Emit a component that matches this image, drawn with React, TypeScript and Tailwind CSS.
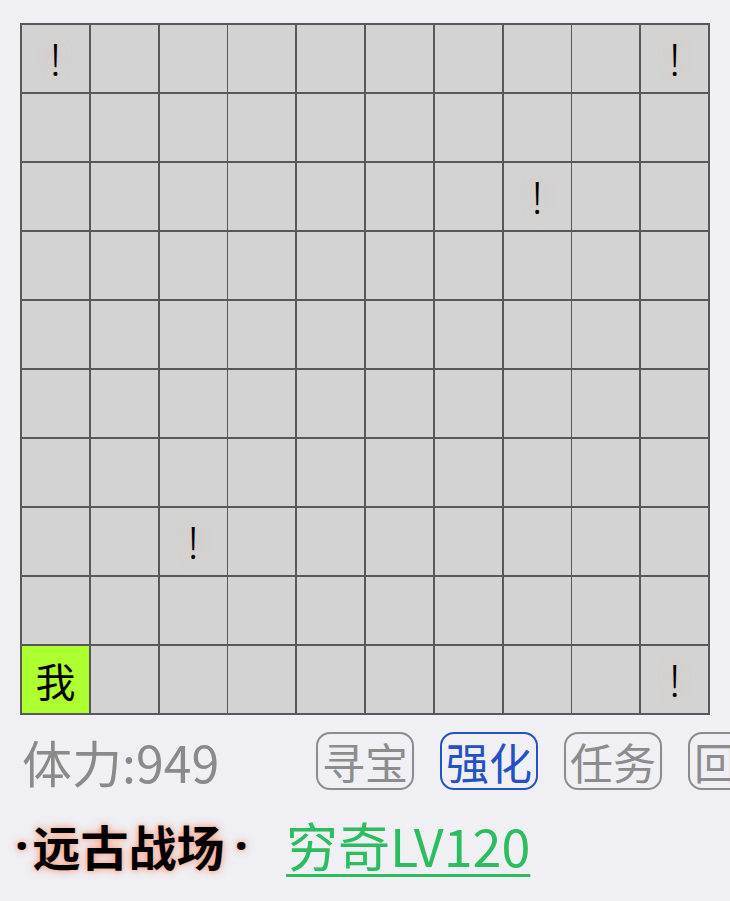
import React from "react";

const marks = new Set(["0-0", "0-9", "2-7", "7-2", "9-9"]);
const menu = ["寻宝", "强化", "任务", "回城"];

const Cell = ({ r, c }: { r: number; c: number }) => {
  if (r === 9 && c === 0) {
    return (
      <div className="flex h-[67px] w-[67px] items-center justify-center bg-[#adff2f] text-[40px] text-black">
        我
      </div>
    );
  }
  return (
    <div className="flex h-[67px] w-[67px] items-center justify-center bg-[#d3d3d3] text-[44px] leading-none text-black">
      {marks.has(`${r}-${c}`) && (
        <span className="font-['Noto_Sans',sans-serif] font-light [text-shadow:0_0_16px_#e9b7a8]">!</span>
      )}
    </div>
  );
};

export default function App() {
  return (
    <div className="min-h-[901px] w-[730px] overflow-hidden bg-[#efeff4] pt-[23px] font-['Noto_Sans_CJK_SC','Noto_Sans',sans-serif]">
      {/* map */}
      <div className="ml-[20px] grid w-[690px] grid-cols-10 gap-[2px] bg-[#585858] p-[2px]">
        {Array.from({ length: 100 }, (_, i) => (
          <Cell key={i} r={Math.floor(i / 10)} c={i % 10} />
        ))}
      </div>

      {/* stats + menu */}
      <div className="mt-[16px] flex h-[60px] items-center whitespace-nowrap">
        <div className="ml-[22px] w-[294px] shrink-0 text-[50px] leading-none text-[#8a8a8a]">体力:949</div>
        <div className="flex shrink-0 gap-[26px]">
          {menu.map((m) => (
            <button
              key={m}
              className={
                m === "强化"
                  ? "h-[58px] w-[98px] shrink-0 rounded-[14px] border-2 border-[#2452c4] text-[43px] leading-none text-[#2452c4]"
                  : "h-[58px] w-[98px] shrink-0 rounded-[14px] border-2 border-[#8c8c8c] text-[43px] leading-none text-[#8c8c8c]"
              }
            >
              {m}
            </button>
          ))}
        </div>
      </div>

      {/* location */}
      <div className="mt-[28px] flex items-center whitespace-nowrap">
        <div className="ml-[11px] flex items-center text-[48px] font-bold leading-none text-black [text-shadow:0_0_10px_#f5a184,0_0_4px_#f7b9a2]">
          <span className="px-[4px] font-['Noto_Sans',sans-serif]">·</span>
          <span>远古战场</span>
          <span className="pl-[10px] pr-[4px] font-['Noto_Sans',sans-serif]">·</span>
        </div>
        <div className="ml-[34px] text-[52px] leading-none text-[#2dbd61] underline decoration-[3px] underline-offset-[7px]">
          穷奇LV120
        </div>
      </div>
    </div>
  );
}
